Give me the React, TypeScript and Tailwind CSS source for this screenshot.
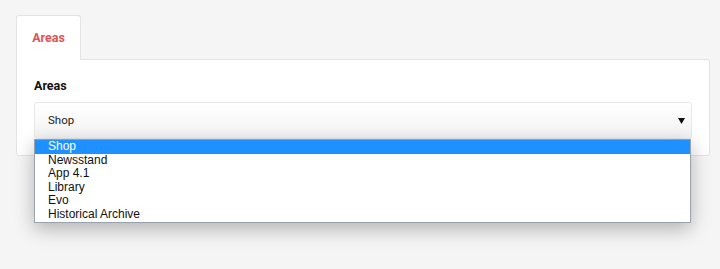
const areas = ['Shop', 'Newsstand', 'App 4.1', 'Library', 'Evo', 'Historical Archive'];

const App = () => {
  return (
    <div className="min-h-[269px] w-[720px] bg-[#f5f5f5] pt-[15px] pl-4 pr-[10px]" style={{ fontFamily: 'Roboto, "Liberation Sans", sans-serif' }}>
      <div className="flex">
        <div className="relative z-10 -mb-px flex h-[45px] w-[65px] items-center justify-center rounded-t-[3px] border border-b-0 border-[#e3e3e3] bg-white">
          <span className="text-[12.5px] font-bold text-[#dc5454]">Areas</span>
        </div>
      </div>
      <div className="relative h-[97px] rounded-b-[3px] rounded-tr-[3px] border border-[#e3e3e3] bg-white px-[17px] pt-[17px]">
        <h2 className="text-[12.5px] font-bold leading-[18px] text-[#111]">Areas</h2>
        <div className="relative mt-[7px]">
          <div className="flex h-[37px] items-center justify-between rounded-[3px] border border-[#e8e8e8] bg-gradient-to-b from-white to-[#f3f3f3] pl-[13px] pr-[6px]">
            <span className="text-[11.5px] text-[#222]">Shop</span>
            <svg width="7" height="6" viewBox="0 0 7 6">
              <path d="M0 0h7L3.5 6z" fill="#111" />
            </svg>
          </div>
          <div
            className="absolute left-0 top-[37px] z-20 w-[657px] border border-[#9aa3ad] border-t-[#8fa0b4] bg-white shadow-[0_6px_18px_rgba(0,0,0,0.28)]"
            style={{ fontFamily: '"Liberation Sans", Arial, sans-serif' }}
          >
            {areas.map((a, i) => (
              <div
                key={a}
                className={`h-[13.6px] pl-[13px] text-[12px] leading-[13.6px] ${i === 0 ? 'bg-[#1e90ff] text-white' : 'text-[#111]'}`}
              >
                {a}
              </div>
            ))}
          </div>
        </div>
      </div>
    </div>
  );
};

export default App;
